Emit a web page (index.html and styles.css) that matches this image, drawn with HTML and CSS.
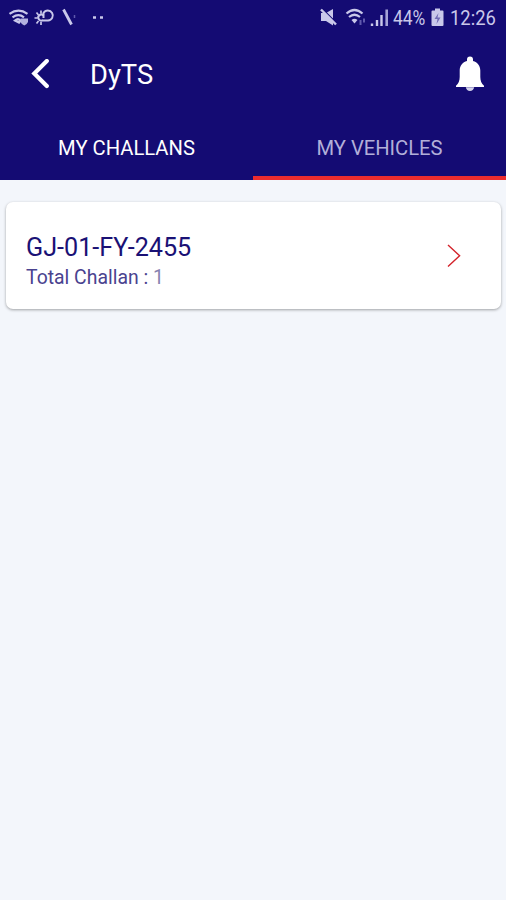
FILE: index.html
```html
<!DOCTYPE html>
<html lang="en">
<head>
  <meta charset="UTF-8">
  <meta name="viewport" content="width=device-width, initial-scale=1.0">
  <title>DyTS - My Vehicles</title>
  <link rel="stylesheet" href="styles.css">
</head>
<body>

  <header class="header">
    <!-- Status bar -->
    <div class="status-bar">
      <svg width="110" height="36" viewBox="0 0 110 36" fill="none" stroke="#c9c8ea" stroke-width="2.200">
        <path d="M9.500 13.800Q18.500 7.500 27.500 13.800M12.500 17.300Q18.500 13 24 17.300M15 20.500Q18 18 20.500 20.500L19 22.500Z"/>
        <path d="M20.500 18.500h7.500v3.500q-1 2.500-3.700 3.500q-2.700-1-3.800-3.500z" fill="#b3b1df" stroke="none"/>
        <path d="M43.500 15.500a3 3 0 1 0-.5 4.500" stroke-width="2"/>
        <path d="M34.500 18h3M36.500 12.500l2 2.500M41 10.500v3M36.500 23.500l2-2.500M41 22v3" stroke-width="1.700"/>
        <path d="M42.500 20.500h5.500a5 5 0 1 0-4.500-7.500v5" stroke-width="2"/>
        <path d="M63.500 9.500l8 15" stroke-width="2.800"/>
        <path d="M74.500 15v3" stroke="#5f59ad" stroke-width="1.500"/>
        <path d="M93 17.500h3M100 17.500h3" stroke-width="2.500"/>
      </svg>
      <div class="status-right">
        <svg width="70" height="36" viewBox="0 0 70 36" fill="none" stroke="#c9c8ea">
          <path d="M2 13h5l7-4v16.500l-7-4.500h-5z" fill="#c9c8ea" stroke="none"/>
          <path d="M3.500 9l15 15" stroke="#140b73" stroke-width="1.500"/>
          <path d="M2 9.500l15 15" stroke-width="2.400"/>
          <path d="M27.500 13.500Q35.500 6.500 43.500 13.500M30 17Q35.500 12.500 41 17" stroke-width="2.200"/>
          <path d="M32.500 20Q35.500 17.500 38.500 20L35.500 23.500Z" fill="#c9c8ea" stroke="none"/>
          <path d="M41.500 20v5M45 18.500v4" stroke="#5f59ad" stroke-width="2"/>
          <path d="M53 23.500v2.500M58 20v6M62.500 15v11" stroke-width="2.400"/>
          <path d="M67.700 9.500v16.500" stroke="#a5a3d7" stroke-width="2.600"/>
        </svg>
        <span class="battery-text">44%</span>
        <svg class="battery" width="13" height="36" viewBox="0 0 13 36">
          <path d="M4 8.500h5v2h2.500q1 0 1 1v13.500q0 1-1 1h-10q-1 0-1-1v-13.500q0-1 1-1h2.500z" fill="#c9c8ea"/>
          <path d="M7.500 13l-4 6h3l-1 5 4-6.500h-3z" fill="#716cb5"/>
        </svg>
        <span class="clock">12:26</span>
      </div>
    </div>

    <!-- Title bar -->
    <div class="title-bar">
      <svg width="18" height="30" viewBox="0 0 18 30" fill="none" stroke="#fff" stroke-width="4.200">
        <path d="M15.800 2L3.300 14.500L15.800 27" stroke-linecap="round"/>
      </svg>
      <h1>DyTS</h1>
      <svg width="30" height="36" viewBox="0 0 30 36" fill="#fff">
        <path d="M15 .5a3 3 0 0 1 3 3v1.600c4.500 1.300 7.300 4.700 7.300 9.400v6.500c0 3.700 1.200 6.500 3.700 8.700v1.300H1v-1.300c2.500-2.200 3.700-5 3.700-8.700v-6.500c0-4.700 2.800-8.100 7.300-9.400v-1.600a3 3 0 0 1 3-3z"/>
        <path d="M10.800 31.300h8.400c-.4 2.200-2 3.700-4.200 3.700s-3.800-1.500-4.200-3.700z" fill="#d4d3ec"/>
      </svg>
    </div>

    <!-- Tabs -->
    <nav class="tabs">
      <a class="tab">MY CHALLANS</a>
      <a class="tab active">MY VEHICLES</a>
    </nav>
  </header>

  <main class="container">
    <div class="card">
      <div class="info">
        <h2>GJ-01-FY-2455</h2>
        <p>Total Challan : <span class="count">1</span></p>
      </div>
      <svg width="14" height="24" viewBox="0 0 14 24" fill="none" stroke="#d3222a" stroke-width="1.400">
        <path d="M1 1L12.600 11.700L1 22.400"/>
      </svg>
    </div>
  </main>

</body>
</html>
```
FILE: styles.css
```css
* {
  margin: 0;
  padding: 0;
  box-sizing: border-box;
  font-family: Roboto, sans-serif;
}

body {
  height: 100vh;
  background: #f3f6fb;
  overflow: hidden;
}

.header {
  height: 180px;
  background: #140b73;
  color: #fff;
}

.status-bar {
  display: flex;
  justify-content: space-between;
  height: 36px;
}

.status-right {
  display: flex;
  padding-right: 10px;
  font-size: 20px;
  line-height: 37px;
  color: #c9c8ea;
}

.battery-text {
  width: 34px;
  margin-left: 4px;
  transform: scaleX(0.87);
  transform-origin: left;
}

.battery {
  margin-left: 4px;
}

.clock {
  width: 46px;
  margin-left: 6px;
  transform: scaleX(0.92);
  transform-origin: left;
}

.title-bar {
  display: flex;
  align-items: center;
  height: 76px;
  padding: 0 21px 0 31px;
}

h1 {
  flex: 1;
  padding-top: 2px;
  margin-left: 41px;
  font-size: 27.3px;
  font-weight: 400;
  line-height: 32px;
}

.tabs {
  display: flex;
  height: 68px;
}

.tab {
  flex: 1;
  padding-top: 20px;
  border-bottom: 4px solid transparent;
  font-size: 20.2px;
  line-height: 32px;
  text-align: center;
}

.tab.active {
  border-bottom-color: #ec2c2e;
  color: #b2afd9;
}

.container {
  padding: 22px 5px 0 6px;
}

.card {
  display: flex;
  align-items: center;
  height: 107px;
  padding: 0 40px 0 20px;
  background: #fff;
  border-radius: 7px;
  box-shadow: 0 1px 3px rgba(0, 0, 0, 0.35);
}

.info {
  flex: 1;
  padding-top: 11px;
  color: #1a1175;
}

h2 {
  font-size: 25.2px;
  font-weight: 400;
  line-height: 32px;
}

p {
  font-size: 19.4px;
  line-height: 27px;
  color: #4a438f;
}

.count {
  color: #8782b0;
}
```
